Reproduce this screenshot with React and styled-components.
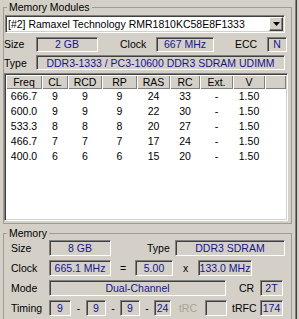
import styled, { createGlobalStyle } from 'styled-components'

const GlobalStyle = createGlobalStyle`
    html, body {
        margin: 0;
        padding: 0;
        background: #d4d0c8;
        overflow: hidden;
    }
    body {
        font-family: "Liberation Sans", Arial, sans-serif;
        font-size: 10.5px;
        color: #000;
    }
`

const COLS = '36px 26px 34px 35px 33px 30px 33px 32px 1fr'

const Window = styled.div`
    width: 297px;
    height: 319px;
    box-sizing: border-box;
    border-right: 1px solid #404040;
    box-shadow: inset -1px 0 0 #808080;
    overflow: hidden;
`

const Group = styled.fieldset`
    margin: ${p => p.$top || 0}px 0 0 3px;
    padding: 0 0 ${p => p.$pb || 0}px 0;
    width: 289px;
    box-sizing: border-box;
    border: 1px solid #a09c94;
    min-inline-size: 0;
`

const Legend = styled.legend`
    margin-left: 3px;
    padding: 0 2px;
    line-height: ${p => p.$lh}px;
`

const Stack = styled.div`
    display: flex;
    flex-direction: column;
    gap: ${p => p.$gap}px;
    padding-top: ${p => p.$pt || 0}px;
`

const Row = styled.div`
    display: flex;
    align-items: center;
    height: ${p => p.$h}px;
`

const Label = styled.span`
    flex: none;
    width: ${p => p.$w}px;
    padding-left: ${p => p.$pl || 0}px;
    box-sizing: border-box;
    white-space: nowrap;
    text-align: ${p => (p.$center ? 'center' : 'left')};
    color: ${p => (p.$dim ? '#a6a39c' : '#000')};
`

const Field = styled.div`
    flex: none;
    width: ${p => p.$w}px;
    height: ${p => p.$h || 15}px;
    box-sizing: border-box;
    border: 1px solid;
    border-color: #808080 #fff #fff #808080;
    box-shadow: inset 1px 1px 0 #404040;
    color: #14148c;
    display: flex;
    align-items: center;
    justify-content: center;
    white-space: nowrap;
    overflow: hidden;
`

const Combo = styled.div`
    margin-left: 1px;
    width: 280px;
    height: 18px;
    box-sizing: border-box;
    background: #fff;
    border: 1px solid;
    border-color: #808080 #fff #fff #808080;
    box-shadow: inset 1px 1px 0 #404040, inset -1px -1px 0 #d4d0c8;
    display: flex;
    align-items: center;
    padding: 0 1px 0 2px;
`

const ComboText = styled.span`
    flex: 1;
    white-space: nowrap;
    overflow: hidden;
`

const DropButton = styled.div`
    flex: none;
    width: 14px;
    height: 14px;
    box-sizing: border-box;
    background: #d4d0c8;
    border: 1px solid;
    border-color: #fff #404040 #404040 #fff;
    box-shadow: inset -1px -1px 0 #808080;
    display: flex;
    align-items: center;
    justify-content: center;
`

const List = styled.div`
    width: 284px;
    height: 148px;
    box-sizing: border-box;
    background: #fff;
    border: 1px solid;
    border-color: #808080 #fff #fff #808080;
    box-shadow: inset 1px 1px 0 #404040, inset -1px -1px 0 #d4d0c8;
    padding: 1px 1px 0 1px;
`

const HeaderRow = styled.div`
    display: grid;
    grid-template-columns: ${COLS};
    height: 14px;
`

const HeaderCell = styled.div`
    background: #d4d0c8;
    box-shadow: inset 1px 1px 0 #fff, inset -1px -1px 0 #808080;
    text-align: center;
    line-height: 14px;
`

const DataRow = styled.div`
    display: grid;
    grid-template-columns: ${COLS};
    height: 15px;
    line-height: 15px;
    text-align: center;
    &:first-of-type {
        margin-top: 1px;
    }
`

const headers = ['Freq', 'CL', 'RCD', 'RP', 'RAS', 'RC', 'Ext.', 'V', '']

const timings = [
    ['666.7', 9, 9, 9, 24, 33, '-', '1.50'],
    ['600.0', 9, 9, 9, 22, 30, '-', '1.50'],
    ['533.3', 8, 8, 8, 20, 27, '-', '1.50'],
    ['466.7', 7, 7, 7, 17, 24, '-', '1.50'],
    ['400.0', 6, 6, 6, 15, 20, '-', '1.50'],
]

function Arrow() {
    return (
        <svg width="7" height="4" viewBox="0 0 7 4">
            <polygon points="0,0 7,0 3.5,4" fill="#000" />
        </svg>
    )
}

export default function App() {
    return (
        <Window>
            <GlobalStyle />
            <Group $pb={2}>
                <Legend $lh={14}>Memory Modules</Legend>
                <Stack $gap={3} $pt={1}>
                    <Combo>
                        <ComboText>[#2] Ramaxel Technology RMR1810KC58E8F1333</ComboText>
                        <DropButton>
                            <Arrow />
                        </DropButton>
                    </Combo>
                    <Row $h={16}>
                        <Label $w={32}>Size</Label>
                        <Field $w={62}>2 GB</Field>
                        <Label $w={58} $pl={22}>Clock</Label>
                        <Field $w={58}>667 MHz</Field>
                        <Label $w={53} $pl={21}>ECC</Label>
                        <Field $w={20}>N</Field>
                    </Row>
                    <Row $h={15}>
                        <Label $w={32}>Type</Label>
                        <Field $w={249}>DDR3-1333 / PC3-10600 DDR3 SDRAM UDIMM</Field>
                    </Row>
                    <List>
                        <HeaderRow>
                            {headers.map((h, i) => (
                                <HeaderCell key={i}>{h}</HeaderCell>
                            ))}
                        </HeaderRow>
                        {timings.map(row => (
                            <DataRow key={row[0]}>
                                {row.map((v, i) => (
                                    <span key={i}>{v}</span>
                                ))}
                            </DataRow>
                        ))}
                    </List>
                </Stack>
            </Group>

            <Group $top={3} $pb={8}>
                <Legend $lh={13}>Memory</Legend>
                <Stack $gap={4}>
                    <Row $h={16}>
                        <Label $w={45} $pl={7}>Size</Label>
                        <Field $w={62} $h={16}>8 GB</Field>
                        <Label $w={64} $pl={36}>Type</Label>
                        <Field $w={110} $h={16}>DDR3 SDRAM</Field>
                    </Row>
                    <Row $h={16}>
                        <Label $w={45} $pl={7}>Clock</Label>
                        <Field $w={62} $h={16}>665.1 MHz</Field>
                        <Label $w={24} $center>=</Label>
                        <Field $w={38} $h={16}>5.00</Field>
                        <Label $w={25} $center>x</Label>
                        <Field $w={54} $h={16}>133.0 MHz</Field>
                    </Row>
                    <Row $h={16}>
                        <Label $w={45} $pl={7}>Mode</Label>
                        <Field $w={177} $h={16}>Dual-Channel</Field>
                        <Label $w={34} $pl={13}>CR</Label>
                        <Field $w={23} $h={16}>2T</Field>
                    </Row>
                    <Row $h={16}>
                        <Label $w={45} $pl={7}>Timing</Label>
                        <Field $w={22} $h={16}>9</Field>
                        <Label $w={15} $center>-</Label>
                        <Field $w={20} $h={16}>9</Field>
                        <Label $w={14} $center>-</Label>
                        <Field $w={20} $h={16}>9</Field>
                        <Label $w={14} $center>-</Label>
                        <Field $w={17} $h={16}>24</Field>
                        <Label $w={34} $center $dim>tRC</Label>
                        <Field $w={22} $h={16} />
                        <Label $w={33} $pl={5}>tRFC</Label>
                        <Field $w={23} $h={16}>174</Field>
                    </Row>
                </Stack>
            </Group>
        </Window>
    )
}
